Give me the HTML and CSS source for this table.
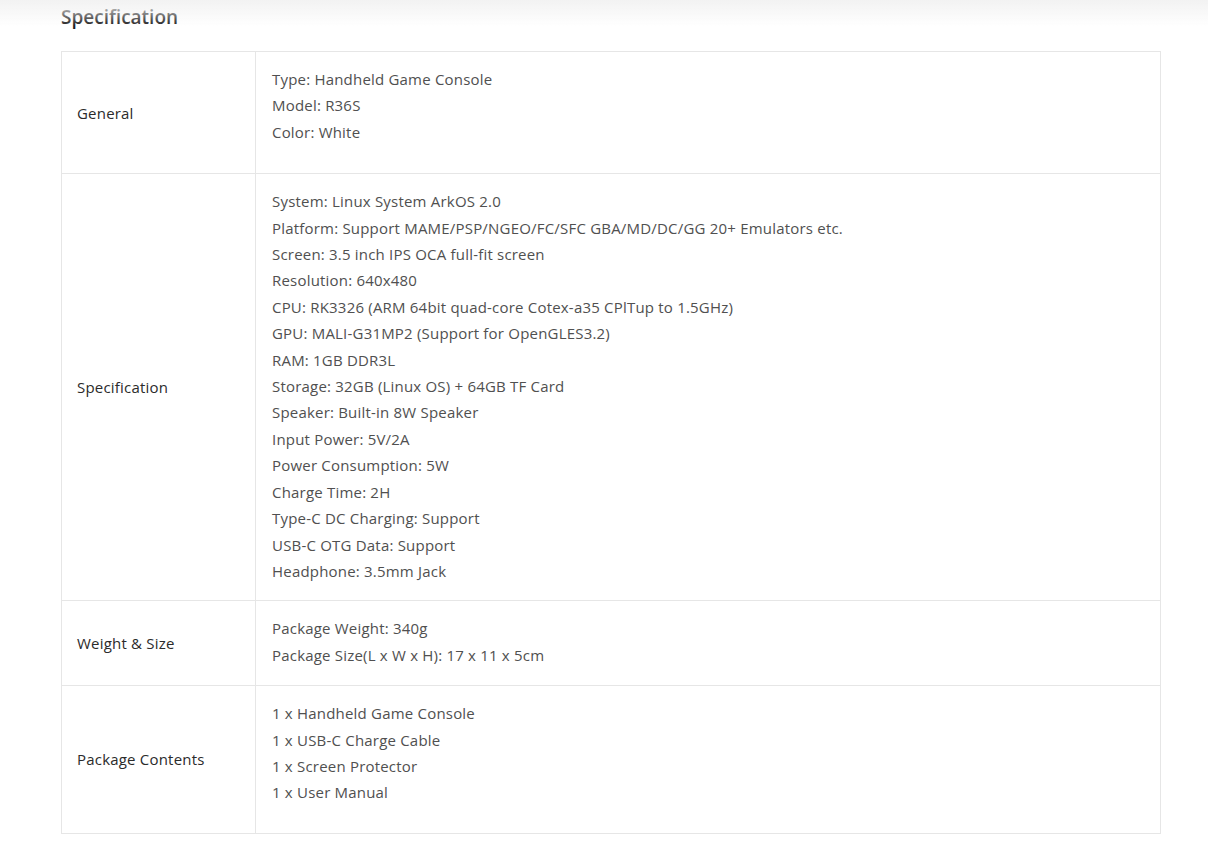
FILE: index.html
```html
<!DOCTYPE html>
<html lang="en">
<head>
  <meta charset="UTF-8" />
  <meta name="viewport" content="width=device-width, initial-scale=1.0" />
  <title>Specification</title>
  <link rel="stylesheet" href="styles.css">
</head>
<body>
  <div class="sombra"></div>
  <div class="contenido">
    <h2>Specification</h2>
    <table class="specs">
      <tr>
        <td class="etiqueta">General</td>
        <td class="valor extra">
          Type: Handheld Game Console<br>
          Model: R36S<br>
          Color: White
        </td>
      </tr>
      <tr>
        <td class="etiqueta">Specification</td>
        <td class="valor largo">
          System: Linux System ArkOS 2.0<br>
          Platform: Support MAME/PSP/NGEO/FC/SFC GBA/MD/DC/GG 20+ Emulators etc.<br>
          Screen: 3.5 inch IPS OCA full-fit screen<br>
          Resolution: 640x480<br>
          CPU: RK3326 (ARM 64bit quad-core Cotex-a35 CPlTup to 1.5GHz)<br>
          GPU: MALI-G31MP2 (Support for OpenGLES3.2)<br>
          RAM: 1GB DDR3L<br>
          Storage: 32GB (Linux OS) + 64GB TF Card<br>
          Speaker: Built-in 8W Speaker<br>
          Input Power: 5V/2A<br>
          Power Consumption: 5W<br>
          Charge Time: 2H<br>
          Type-C DC Charging: Support<br>
          USB-C OTG Data: Support<br>
          Headphone: 3.5mm Jack
        </td>
      </tr>
      <tr>
        <td class="etiqueta">Weight &amp; Size</td>
        <td class="valor">
          Package Weight: 340g<br>
          Package Size(L x W x H): 17 x 11 x 5cm
        </td>
      </tr>
      <tr>
        <td class="etiqueta">Package Contents</td>
        <td class="valor extra ultimo">
          1 x Handheld Game Console<br>
          1 x USB-C Charge Cable<br>
          1 x Screen Protector<br>
          1 x User Manual
        </td>
      </tr>
    </table>
  </div>
</body>
</html>
```

FILE: styles.css
```css
body {
  margin: 0;
  background: #fff;
  font-family: "Open Sans", Arial, sans-serif;
  color: #333;
}
.sombra {
  position: fixed;
  top: 0;
  left: 0;
  right: 0;
  height: 26px;
  background: linear-gradient(#f2f2f2, rgba(255, 255, 255, 0));
  pointer-events: none;
}
.contenido {
  padding: 0 48px 0 61px;
}
h2 {
  margin: 0;
  padding-top: 4px;
  height: 47px;
  font-size: 19px;
  font-weight: 600;
  line-height: 26px;
  color: #1e1e1e;
}
.specs {
  width: 1100px;
  border-collapse: collapse;
  font-size: 15px;
  letter-spacing: 0.2px;
}
.specs td {
  border: 1px solid #e6e6e6;
  vertical-align: middle;
}
.etiqueta {
  width: 162px;
  padding: 0 16px 0 15px;
  color: #2b2b2b;
}
.valor {
  padding: 14px 16px 17px;
  line-height: 26.4px;
  color: #505050;
}
.valor.largo {
  padding-bottom: 16px;
}
.valor.extra {
  padding-bottom: 28px;
}
.valor.ultimo {
  padding-bottom: 27px;
}
```
